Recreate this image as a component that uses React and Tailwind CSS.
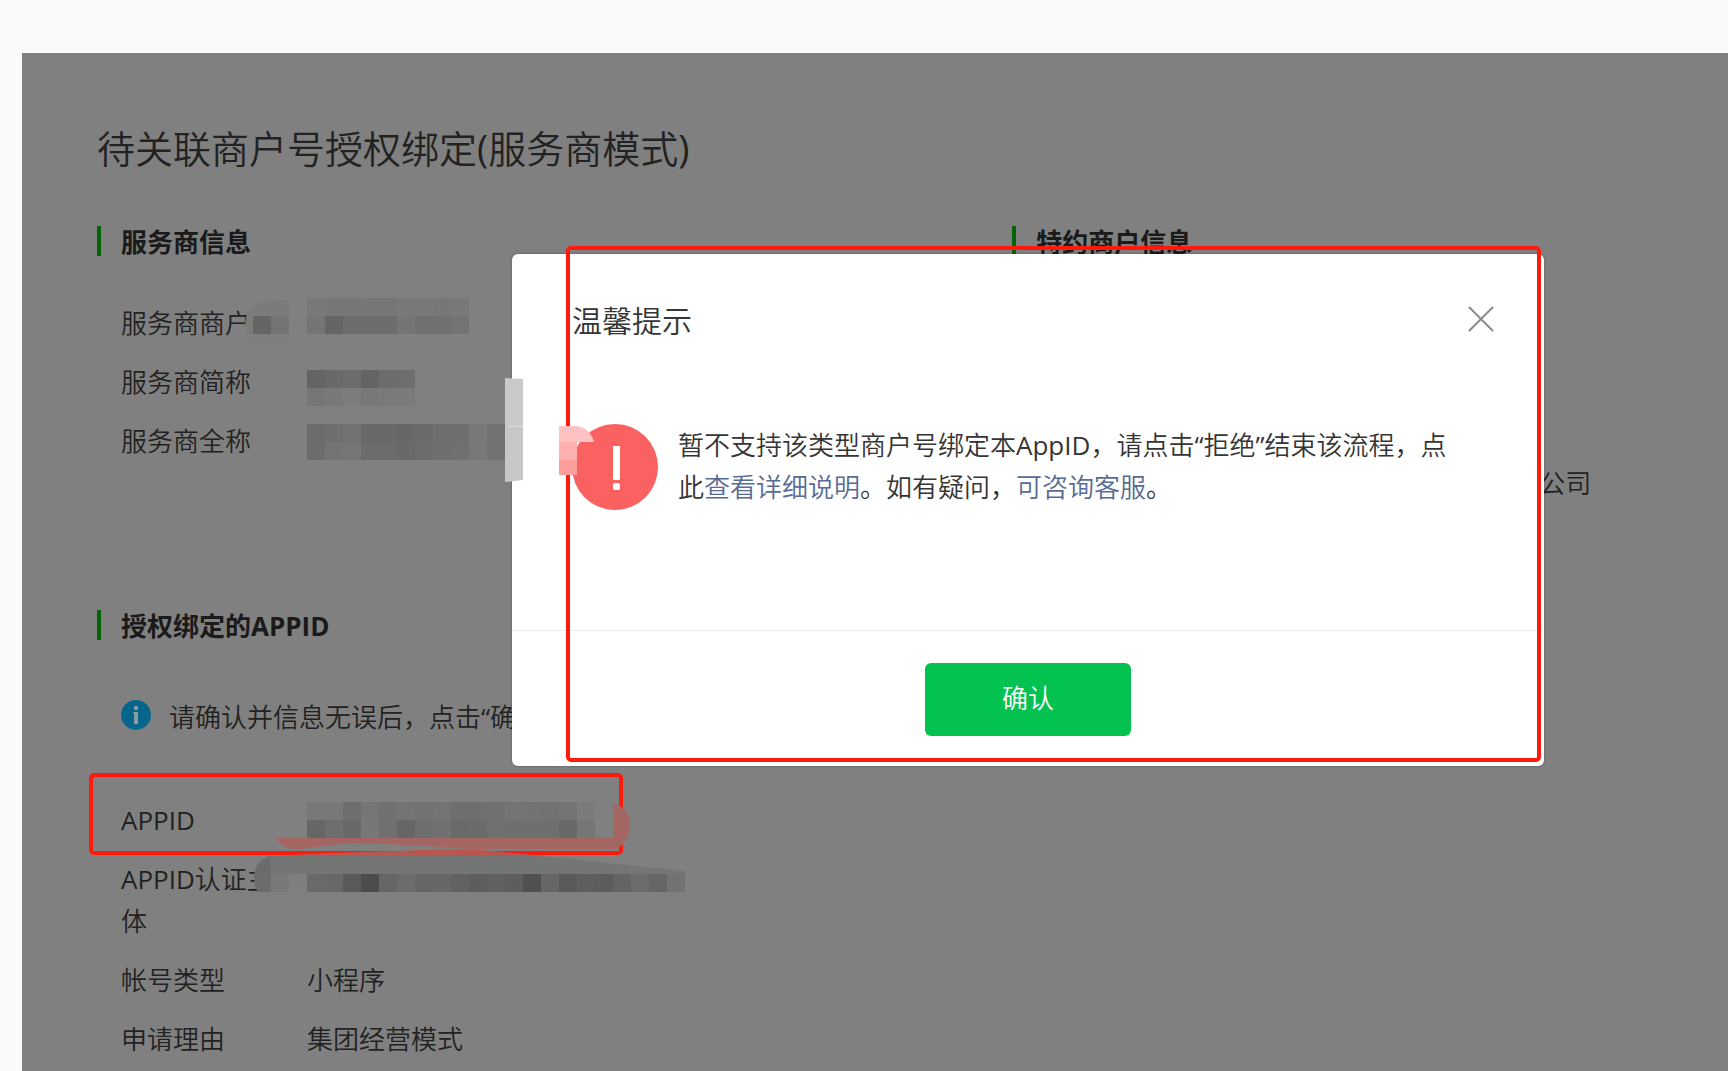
import { X } from 'lucide-react';

/**
 * SectionTitle - green bar followed by a bold heading
 */
const SectionTitle = ({ children }) => (
  <div className="flex h-[30px] items-center gap-5">
    <span className="h-full w-1 bg-[#046404]" />
    <h2 className="pt-0.5 font-['Open_Sans','Noto_Sans_CJK_SC',sans-serif] text-[26px] leading-8 font-bold text-[#1a1a1a]">
      {children}
    </h2>
  </div>
);

/**
 * InfoRow - label / value pair
 */
const InfoRow = ({ label, children }) => (
  <div className="flex gap-7">
    <dt className="w-[158px] shrink-0">{label}</dt>
    <dd>{children}</dd>
  </div>
);

/**
 * Mosaic - strip of grey cells, one row of shades per line
 */
const Mosaic = ({ x, y, w = 18, h = 18, rows }) => (
  <g shapeRendering="crispEdges">
    {rows.map((row, r) =>
      row.split(' ').map((shade, c) => (
        <rect key={`${r}-${c}`} x={x + c * w} y={y + r * h} width={w} height={h} fill={`#${shade}${shade}${shade}`} />
      ))
    )}
  </g>
);

const InfoIcon = () => (
  <svg viewBox="0 0 30 30" className="mt-1 h-[30px] w-[30px] shrink-0" aria-hidden="true">
    <circle cx="15" cy="15" r="15" fill="#05658a" />
    <rect x="13" y="6" width="4" height="4" rx="1" fill="#8d9ba2" />
    <path d="M12 12H17V24H13V13H12Z" fill="#8d9ba2" />
  </svg>
);

const WarnIcon = () => (
  <svg viewBox="0 0 86 86" className="h-[86px] w-[86px] shrink-0" aria-hidden="true">
    <circle cx="43" cy="43" r="43" fill="#fa6161" />
    <rect x="41" y="22" width="7" height="34" rx="1" fill="#fff" />
    <rect x="41" y="59" width="7" height="7" rx="2" fill="#fff" />
  </svg>
);

/**
 * TipDialog - notice shown over the dimmed form
 */
const TipDialog = () => (
  <div
    role="dialog"
    aria-labelledby="tip-title"
    className="relative flex h-[512px] w-[1032px] shrink-0 flex-col rounded-md bg-white shadow-[0_0_3px_rgba(0,0,0,0.3)]"
  >
    <div className="flex items-start justify-between pt-[42px] pr-10 pl-[60px]">
      <h3 id="tip-title" className="text-[30px] leading-[50px] text-[#353535]">温馨提示</h3>
      <button type="button" aria-label="关闭" className="text-[#8a8a8a]">
        <X size={46} strokeWidth={1} />
      </button>
    </div>
    <div className="flex flex-1 gap-5 pt-[78px] pl-[60px]">
      <WarnIcon />
      <p className="w-[786px] text-[26px] leading-[42px] text-[#353535]">
        暂不支持该类型商户号绑定本AppID，请点击“拒绝”结束该流程，点此
        <a href="#detail" className="text-[#576b95]">查看详细说明</a>。如有疑问，
        <a href="#service" className="text-[#576b95]">可咨询客服</a>。
      </p>
    </div>
    <div className="flex h-[136px] justify-center border-t border-[#ececec] pt-8">
      <button type="button" className="h-[73px] w-[206px] rounded-md bg-[#03c250] pb-1 text-[26px] text-white">
        确认
      </button>
    </div>
    <div className="pointer-events-none absolute -top-2 right-[3px] bottom-1 left-[54px] rounded-[5px] border-4 border-[#ff1a0c]" />
  </div>
);

/**
 * Redactions - mosaic and brush strokes that hide the private values
 */
const Redactions = () => (
  <svg viewBox="22 53 800 1018" className="pointer-events-none absolute top-0 left-0 h-[1018px] w-[800px]" aria-hidden="true">
    {/* merchant id */}
    <path d="M289 299 L266 301 Q245 305 245 325 Q246 334 247 334 H289 Z" fill="#7b7b7b" />
    <path d="M247 334 H289 V348 H266 Q252 345 247 334 Z" fill="#7f7f7f" />
    <Mosaic x={253} y={316} rows={['65 74']} />
    <Mosaic x={307} y={298} rows={['79 77 77 76 76 79 79 77 79', '75 65 6d 6d 6d 75 70 70 74']} />
    {/* short name */}
    <Mosaic x={307} y={370} rows={['64 69 6d 64 6c 6e', '76 79 7c 78 7a 7b']} />
    {/* full name */}
    <Mosaic x={307} y={424} rows={['6c 6f 72 69 69 67 6b 6e 6e 78 73', '6c 74 76 6c 6c 69 6c 6e 70 78 72']} />
    <path d="M505 378 L523 379 V426 H505 Z" fill="#c9c9c9" />
    <path d="M505 426 H523 V480 L505 482 Z" fill="#c7c7c7" />
    <path d="M508 426.5 H523" stroke="#dedede" />
    {/* dialog icon */}
    <path d="M559 426 H577 Q590 428 594 442 H559 Z" fill="#ffc2c2" />
    <rect x="559" y="442" width="18" height="18" fill="#ffb1b1" />
    <rect x="559" y="460" width="18" height="15" fill="#ff9d9d" />
    {/* appid */}
    <Mosaic
      x={307}
      y={802}
      rows={['78 78 6e 76 71 74 72 74 6f 6f 71 74 73 72 74 7b', '66 6e 69 77 70 66 6e 71 6a 6b 70 6f 6f 6f 69 76']}
    />
    <path d="M275 838 H613 V803 Q630 808 630 826 Q629 842 617 849 H470 Q400 844 350 843 Q325 846 300 849 Q285 851 275 838 Z" fill="#a36663" />
    {/* appid owner */}
    <path d="M271 855 Q254 862 254 876 Q254 886 258 892 H271 Z" fill="#6b6d6c" />
    <path d="M271 856 H541 L685 871 V874 H271 Z" fill="#747676" />
    <path d="M271 856 Q340 852 400 851 Q440 848 480 850 L545 856 Z" fill="#b8564f" />
    <Mosaic x={271} y={874} rows={['79 7f 6a 68 5a 4c 66 6c 66 67 62 5d 61 5d 50 66 5a 5e 5c 64 6c 66 72']} />
  </svg>
);

export default function App() {
  return (
    <div className="min-h-screen overflow-hidden bg-[#f8fafc] pt-[53px] pl-[22px] font-['Open_Sans','Noto_Sans_CJK_SC_DemiLight','Noto_Sans_CJK_SC',sans-serif]">
      <main className="relative min-h-[1018px] overflow-hidden bg-[#808080] pt-[70px] pl-[75px] text-[26px] leading-[42px] text-[#222]">
        <h1 className="text-[38px] leading-[50px]">待关联商户号授权绑定(服务商模式)</h1>

        <div className="mt-[53px] grid grid-cols-[56%_1fr] gap-x-0.5">
          <section>
            <SectionTitle>服务商信息</SectionTitle>
            <dl className="mt-[46px] flex flex-col gap-[17px] pl-6">
              <InfoRow label="服务商商户" />
              <InfoRow label="服务商简称" />
              <InfoRow label="服务商全称" />
            </dl>
          </section>
          <section>
            <SectionTitle>特约商户信息</SectionTitle>
            <p className="mt-[206px] ml-[527px]">公司</p>
          </section>
        </div>

        <section className="mt-[106px]">
          <SectionTitle>授权绑定的APPID</SectionTitle>
          <div className="mt-[56px] flex gap-[18px] pl-6">
            <InfoIcon />
            <p>请确认并信息无误后，点击“确</p>
          </div>
          <div className="relative mt-[61px] pl-6">
            <div className="absolute -top-[26px] -left-2 h-[82px] w-[534px] rounded-[5px] border-4 border-[#ff1a0c]" />
            <dl className="flex flex-col gap-[17px]">
              <InfoRow label="APPID" />
              <InfoRow label="APPID认证主体" />
              <InfoRow label="帐号类型">小程序</InfoRow>
              <InfoRow label="申请理由">集团经营模式</InfoRow>
            </dl>
          </div>
        </section>

        <div className="absolute inset-0 flex items-start justify-center pt-[201px] pl-[306px]">
          <TipDialog />
        </div>
        <Redactions />
      </main>
    </div>
  );
}
